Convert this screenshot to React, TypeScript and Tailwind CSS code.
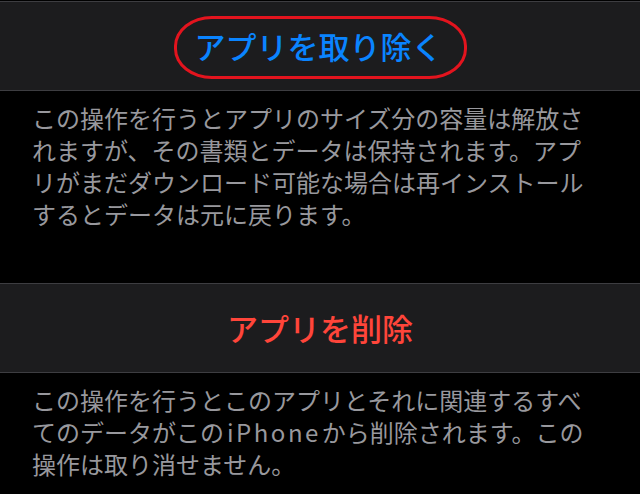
import React from "react";

export default function App() {
  return (
    <div className="w-[640px] h-[494px] bg-black overflow-hidden pt-px [font-family:'Noto_Sans_CJK_JP','Noto_Sans',sans-serif]">
      <div className="h-[90px] bg-[#1c1c1e] border-y border-[#3d3d41] flex items-center justify-center">
        <span className="relative text-[31px] leading-[40px] font-medium text-[#0a84ff] whitespace-nowrap -ml-[3px]">
          アプリを取り除く
          <span className="absolute top-[-10px] bottom-[-13px] left-[-21px] right-[-24px] border-[3px] border-[#e3141e] rounded-[38px/30px]" />
        </span>
      </div>
      <div className="h-[192px] pt-[11px] pl-[32px] text-[24px] leading-[32px] text-[#98989d] whitespace-nowrap">
        この操作を行うとアプリのサイズ分の容量は解放さ
        <br />
        れますが、その書類とデータは保持されます。アプ
        <br />
        リがまだダウンロード可能な場合は再インストール
        <br />
        するとデータは元に戻ります。
      </div>
      <div className="h-[90px] bg-[#1c1c1e] border-y border-[#3d3d41] flex items-center justify-center">
        <span className="text-[31px] leading-[40px] font-medium text-[#ff453a] whitespace-nowrap">
          アプリを削除
        </span>
      </div>
      <div className="pt-[11px] pl-[32px] text-[24px] leading-[32px] text-[#98989d] whitespace-nowrap">
        この操作を行うとこのアプリとそれに関連するすべ
        <br />
        てのデータがこの<span className="ml-[3px] mr-[1px] tracking-[2.5px]">iPhone</span>から削除されます。この
        <br />
        操作は取り消せません。
      </div>
    </div>
  );
}
